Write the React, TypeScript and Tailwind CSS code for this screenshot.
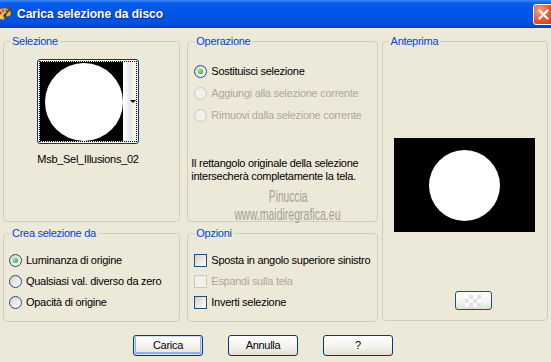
import React from "react";

function Radio({ checked, disabled }: { checked?: boolean; disabled?: boolean }) {
  return (
    <span
      className={
        disabled
          ? "w-[13px] h-[13px] rounded-full border border-[#CAC8BB] bg-[#F1EFE6] shrink-0 flex items-center justify-center"
          : "w-[13px] h-[13px] rounded-full border border-[#1C5180] bg-[linear-gradient(135deg,#D6D1C3,#FFFFFF)] shrink-0 flex items-center justify-center"
      }
    >
      {checked && (
        <span className="w-[5px] h-[5px] rounded-full bg-[radial-gradient(circle_at_35%_35%,#8BEA88,#21A121)]" />
      )}
    </span>
  );
}

function Check({ disabled }: { disabled?: boolean }) {
  return (
    <span
      className={
        disabled
          ? "w-[13px] h-[13px] border border-[#CAC8BB] bg-[#F1EFE6] shrink-0"
          : "w-[13px] h-[13px] border border-[#1C5180] bg-[linear-gradient(135deg,#D6D1C3,#FFFFFF)] shrink-0"
      }
    />
  );
}

function Group({
  label,
  className,
  children,
}: {
  label: string;
  className: string;
  children?: React.ReactNode;
}) {
  return (
    <div className={"relative border border-[#D0D0BF] rounded-[4px] " + className}>
      <span className="absolute -top-[7px] left-[6px] bg-[#ECE9D8] px-[2px] leading-[13px] text-[#0046D5] whitespace-nowrap">
        {label}
      </span>
      {children}
    </div>
  );
}

function XpButton({ children, def }: { children: React.ReactNode; def?: boolean }) {
  return (
    <div
      className={
        def
          ? "w-[70px] h-[21px] rounded-[3px] border border-[#003C74] bg-[linear-gradient(to_bottom,#FFFFFF,#F3F2EC_60%,#E2DED2)] shadow-[inset_0_0_0_1px_#CEE0FB,inset_0_-1px_0_2px_#8CB0E8] flex items-center justify-center leading-[13px]"
          : "w-[70px] h-[21px] rounded-[3px] border border-[#003C74] bg-[linear-gradient(to_bottom,#FFFFFF,#F3F2EC_60%,#E2DED2)] flex items-center justify-center leading-[13px]"
      }
    >
      {children}
    </div>
  );
}

export default function App() {
  return (
    <div className="w-[551px] h-[362px] overflow-hidden bg-[#ECE9D8] relative font-['Liberation_Sans',Arial,sans-serif] text-[11px] tracking-[-0.28px] text-black">
      {/* Title bar */}
      <div className="h-[28px] flex items-center bg-[linear-gradient(to_bottom,#3D8BF5_0px,#0A5DEB_3px,#0055E6_12px,#0052DF_22px,#0043C4_28px)]">
        <svg width="16" height="16" viewBox="0 0 16 16" className="ml-[-4px] shrink-0">
          <path
            d="M8 2C4 2 1 4.5 1 8s2.5 6 6 6c1.5 0 1.8-1 1.3-2-.4-.9.2-1.6 1.2-1.6H12c2 0 3-1.2 3-3C15 4.2 12 2 8 2z"
            fill="#E9B46A"
            stroke="#7A4A1E"
            strokeWidth="0.8"
          />
          <circle cx="4.5" cy="7" r="1.3" fill="#E02424" />
          <circle cx="7" cy="4.6" r="1.2" fill="#2B5BE8" />
          <circle cx="10.4" cy="4.8" r="1.2" fill="#28A828" />
          <circle cx="5" cy="10.6" r="1.2" fill="#F2E030" />
          <path d="M15.5 1L9 9" stroke="#6B3A12" strokeWidth="1.6" />
          <path d="M9.6 8.2L8 10.6" stroke="#2A2A2A" strokeWidth="2" />
        </svg>
        <span className="ml-[5px] text-white font-bold text-[12px] tracking-[0px] leading-[14px] [text-shadow:1px_1px_0_#0B2A8C]">
          Carica selezione da disco
        </span>
        <div className="ml-auto mr-[-3px] w-[21px] h-[21px] rounded-[3px] border border-white bg-[radial-gradient(circle_at_30%_30%,#F3A486,#E2552F_55%,#C13B1B)] flex items-center justify-center shrink-0">
          <svg width="11" height="11" viewBox="0 0 11 11">
            <path d="M1.5 1.5L9.5 9.5M9.5 1.5L1.5 9.5" stroke="white" strokeWidth="2" strokeLinecap="square" />
          </svg>
        </div>
      </div>

      {/* Body */}
      <div className="px-[3px] pt-[13px]">
        <div className="flex">
          {/* Column 1 */}
          <div className="w-[178px] flex flex-col gap-[11px]">
            <Group label="Selezione" className="h-[181px]">
              <div className="ml-[33px] mt-[17px] w-[102px] flex flex-col items-center">
                <div className="w-[102px] h-[85px] rounded-[3px] border border-[#003C74] p-[1px] bg-[#F4F3EE]">
                  <div className="w-full h-full border border-dotted border-black flex relative">
                    <div className="w-[83px] h-full bg-black flex items-center justify-end overflow-hidden">
                      <div className="w-[78px] h-[78px] rounded-full bg-white shrink-0" />
                    </div>
                    <div className="w-[9px] h-full bg-[linear-gradient(to_right,#FFFFFF,#E4E4E4)]" />
                    <span className="absolute right-0 top-[38px] w-0 h-0 border-l-[3px] border-r-[3px] border-t-[3px] border-l-transparent border-r-transparent border-t-black" />
                  </div>
                </div>
                <div className="mt-[9px] whitespace-nowrap leading-[13px]">Msb_Sel_Illusions_02</div>
              </div>
            </Group>
            <Group label="Crea selezione da" className="h-[89px]">
              <div className="mt-[16px] pl-[5px] flex flex-col">
                <div className="h-[21px] flex items-center gap-[4px]">
                  <Radio checked />
                  <span className="leading-[13px]">Luminanza di origine</span>
                </div>
                <div className="h-[21px] flex items-center gap-[4px]">
                  <Radio />
                  <span className="leading-[13px]">Qualsiasi val. diverso da zero</span>
                </div>
                <div className="h-[21px] flex items-center gap-[4px]">
                  <Radio />
                  <span className="leading-[13px]">Opacità di origine</span>
                </div>
              </div>
            </Group>
          </div>

          {/* Column 2 */}
          <div className="ml-[7px] w-[191px] flex flex-col gap-[11px]">
            <Group label="Operazione" className="h-[181px]">
              <div className="mt-[18px] pl-[6px] flex flex-col">
                <div className="h-[22px] flex items-center gap-[4px]">
                  <Radio checked />
                  <span className="leading-[13px]">Sostituisci selezione</span>
                </div>
                <div className="h-[22px] flex items-center gap-[4px]">
                  <Radio disabled />
                  <span className="leading-[13px] text-[#ACA899]">Aggiungi alla selezione corrente</span>
                </div>
                <div className="h-[22px] flex items-center gap-[4px]">
                  <Radio disabled />
                  <span className="leading-[13px] text-[#ACA899]">Rimuovi dalla selezione corrente</span>
                </div>
              </div>
              <div className="mt-[31px] pl-[3px] leading-[13px] whitespace-nowrap">
                Il rettangolo originale della selezione
                <br />
                intersecherà completamente la tela.
              </div>
            </Group>
            <Group label="Opzioni" className="h-[89px]">
              <div className="mt-[16px] pl-[6px] flex flex-col">
                <div className="h-[21px] flex items-center gap-[4px]">
                  <Check />
                  <span className="leading-[13px]">Sposta in angolo superiore sinistro</span>
                </div>
                <div className="h-[21px] flex items-center gap-[4px]">
                  <Check disabled />
                  <span className="leading-[13px] text-[#ACA899]">Espandi sulla tela</span>
                </div>
                <div className="h-[21px] flex items-center gap-[4px]">
                  <Check />
                  <span className="leading-[13px]">Inverti selezione</span>
                </div>
              </div>
            </Group>
          </div>

          {/* Column 3 */}
          <div className="ml-[4px] w-[167px]">
            <Group label="Anteprima" className="h-[280px] flex flex-col">
              <div className="mt-[96px] self-center w-[141px] h-[94px] bg-black flex items-center justify-center">
                <div className="w-[71px] h-[71px] rounded-full bg-white" />
              </div>
              <div className="mt-[59px] ml-[72px] w-[37px] h-[19px] rounded-[3px] border border-[#1C4F86] bg-[linear-gradient(to_bottom,#FFFFFF,#F3F2EC_60%,#E2DED2)] flex items-center justify-center">
                <div className="w-[16px] h-[12px] bg-[conic-gradient(#E2E2E2_25%,#FFFFFF_0_50%,#E2E2E2_0_75%,#FFFFFF_0)] bg-[length:8px_8px]" />
              </div>
            </Group>
          </div>
        </div>

        {/* Buttons */}
        <div className="mt-[13px] pl-[130px] flex gap-[25px]">
          <XpButton def>Carica</XpButton>
          <XpButton>Annulla</XpButton>
          <XpButton>?</XpButton>
        </div>
      </div>

      {/* Watermark */}
      <div className="absolute left-[188px] top-[188px] w-[200px] flex flex-col items-center text-[17px] leading-[18px] tracking-[0px] text-[#9C998C] opacity-90 pointer-events-none">
        <span className="scale-x-[0.6] whitespace-nowrap">Pinuccia</span>
        <span className="scale-x-[0.62] whitespace-nowrap">www.maidiregrafica.eu</span>
      </div>
    </div>
  );
}
